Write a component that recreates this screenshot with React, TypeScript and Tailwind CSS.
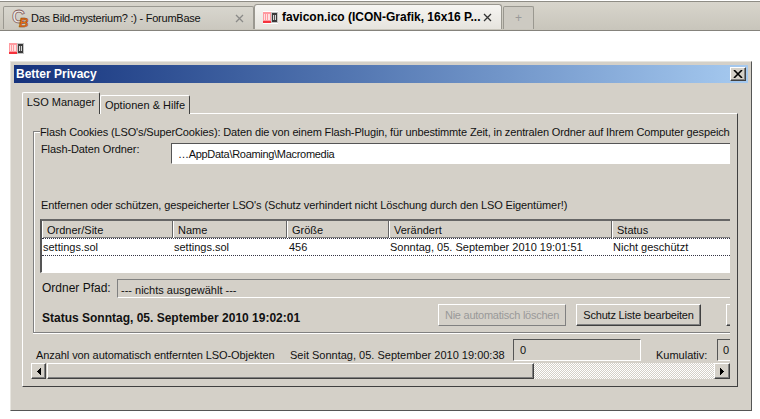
import React from 'react';

const raised = 'border border-t-white border-l-white border-r-[#404040] border-b-[#404040] shadow-[inset_-1px_-1px_0_#808080]';
const sunken = 'border border-t-[#555] border-l-[#555] border-r-white border-b-white';

function FaviconIco() {
  return (
    <svg width="15" height="11" viewBox="0 0 15 11" shapeRendering="crispEdges">
      <rect x="0" y="0" width="8" height="11" fill="#ff9aa0" />
      <rect x="1" y="2" width="1" height="6" fill="#ffe0e0" />
      <rect x="3" y="2" width="1" height="6" fill="#ffe0e0" />
      <rect x="5" y="2" width="2" height="6" fill="#ffe0e0" />
      <rect x="0" y="9" width="8" height="2" fill="#f5333c" />
      <rect x="8" y="0" width="7" height="11" fill="#c4c4c4" />
      <rect x="9" y="1" width="5" height="9" fill="#3a3a3a" />
      <rect x="10" y="3" width="3" height="5" fill="#d8d8d8" />
      <rect x="11" y="3" width="1" height="5" fill="#555" />
    </svg>
  );
}

function ForumLogo() {
  return (
    <svg width="17" height="17" viewBox="0 0 17 17" className="overflow-visible">
      <text x="0" y="13" fontFamily="Liberation Sans" fontSize="18" fontWeight="700" fill="#eeeae6" stroke="#86615e" strokeWidth="0.8">C</text>
      <text x="7" y="16.5" fontFamily="Liberation Sans" fontSize="13" fontWeight="700" fontStyle="italic" fill="#ea6f14" stroke="#6f3510" strokeWidth="0.4">B</text>
    </svg>
  );
}

function TabClose({ color }: { color: string }) {
  return (
    <svg width="9" height="9" viewBox="0 0 9 9" fill="none" stroke={color} strokeWidth="1.3">
      <path d="M1 1 L8 8 M8 1 L1 8" />
    </svg>
  );
}

function Arrow({ dir }: { dir: 'left' | 'right' }) {
  return (
    <svg width="4" height="7" viewBox="0 0 4 7" shapeRendering="crispEdges">
      <path d={dir === 'left' ? 'M4 0 V7 H3 V6 H2 V5 H1 V4 H0 V3 H1 V2 H2 V1 H3 V0 Z' : 'M0 0 V7 H1 V6 H2 V5 H3 V4 H4 V3 H3 V2 H2 V1 H1 V0 Z'} fill="#000" />
    </svg>
  );
}

const columns = [
  { label: 'Ordner/Site', width: 'w-[131px]' },
  { label: 'Name', width: 'w-[114px]' },
  { label: 'Größe', width: 'w-[102px]' },
  { label: 'Verändert', width: 'w-[223px]' },
  { label: 'Status', width: 'w-[130px]' },
];

const cells = [
  { text: 'settings.sol', width: 'w-[131px]' },
  { text: 'settings.sol', width: 'w-[115px]' },
  { text: '456', width: 'w-[101px]' },
  { text: 'Sonntag, 05. September 2010 19:01:51', width: 'w-[223px]' },
  { text: 'Nicht geschützt', width: 'w-[130px]' },
];

export default function App() {
  return (
    <div className="w-[760px] h-[419px] bg-white overflow-hidden text-[11px] leading-[14px] text-[#111] font-['Liberation_Sans',sans-serif]">
      {/* browser tab strip */}
      <div className="h-[30px] mt-px border-t border-t-[#8e8c85] border-b border-b-[#85837c] bg-gradient-to-b from-[#d8d5cc] to-[#c8c5bb] flex items-end pl-[3px] pb-px">
        <div className="w-[251px] h-[23px] flex items-center border border-b-0 border-[#9a9890] rounded-t-[2px] bg-gradient-to-b from-[#d8d6ce] to-[#cbc8bf] pl-[8px] pr-[9px]">
          <ForumLogo />
          <span className="ml-[2px] flex-1 text-[11px] tracking-[-0.25px] text-[#111]">Das Bild-mysterium? :) - ForumBase</span>
          <TabClose color="#8a8a88" />
        </div>
        <div className="w-[248px] h-[25px] flex items-center border border-b-0 border-[#9a9890] rounded-t-[3px] bg-gradient-to-b from-[#f6f5f2] to-[#e6e4de] pl-[8px] pr-[9px]">
          <span className="bg-white py-px flex">
            <FaviconIco />
          </span>
          <span className="ml-[4px] flex-1 whitespace-nowrap text-[12px] font-bold text-black">favicon.ico (ICON-Grafik, 16x16 P...</span>
          <TabClose color="#333" />
        </div>
        <div className="ml-px w-[31px] h-[23px] flex items-center justify-center border border-b-0 border-[#9a9890] rounded-t-[2px] bg-[#cdcac2]">
          <span className="text-[12px] text-[#999]">+</span>
        </div>
      </div>

      {/* page favicon */}
      <div className="h-[30px] pl-[9px] pt-[12px]">
        <FaviconIco />
      </div>

      {/* dialog window */}
      <div className="ml-[10px] w-[742px] h-[350px] bg-[#d4d0c8] border border-t-[#e8e6e0] border-l-[#e8e6e0] border-r-[#555] border-b-[#555] pt-[3px] px-[3px]">
        <div className="h-[18px] flex items-center justify-between bg-gradient-to-r from-[#16327c] to-[#a6caf0] pl-[2px] pr-[2px]">
          <span className="font-bold text-[12px] text-white">Better Privacy</span>
          <button className={`w-[16px] h-[14px] flex items-center justify-center bg-[#d4d0c8] ${raised}`}>
            <svg width="10" height="8" viewBox="0 0 10 8" stroke="#000" strokeWidth="1.6" fill="none">
              <path d="M1 0 L9 8 M9 0 L1 8" />
            </svg>
          </button>
        </div>

        {/* tabs */}
        <div className="mt-[9px] ml-[8px] h-[22px] flex items-end relative z-10 -mb-px">
          <div className="w-[78px] h-[22px] border-t border-l border-r border-t-white border-l-white border-r-[#404040] rounded-t-[2px] bg-[#d4d0c8] flex items-center justify-center pb-[3px]">LSO Manager</div>
          <div className="w-[90px] h-[19px] border-t border-l border-r border-t-white border-l-white border-r-[#404040] rounded-t-[2px] bg-[#d4d0c8] flex items-center justify-center">Optionen &amp; Hilfe</div>
        </div>

        {/* tab panel */}
        <div className="ml-[8px] w-[716px] h-[274px] border border-t-white border-l-white border-r-[#404040] border-b-[#404040] pt-[10px] pl-[8px]">
          <div className="w-[699px] overflow-hidden pt-[7px]">
            <div className="ml-[2px] w-[780px] h-[202px] border border-[#808080] shadow-[inset_1px_1px_0_#fff,0_1px_0_#fff] pl-[6px]">
              <div className="-mt-[7px] w-max whitespace-nowrap bg-[#d4d0c8] pr-[2px] tracking-[-0.13px]">
                Flash Cookies (LSO's/SuperCookies): Daten die von einem Flash-Plugin, für unbestimmte Zeit, in zentralen Ordner auf Ihrem Computer gespeichert werden.
              </div>
              <div className="mt-[4px] flex items-start">
                <div className="w-[131px] shrink-0 pl-px -mt-px tracking-[-0.1px]">Flash-Daten Ordner:</div>
                <div className={`w-[620px] h-[21px] shrink-0 bg-white flex items-center pl-[6px] tracking-[-0.3px] ${sunken}`}>…AppData\Roaming\Macromedia</div>
              </div>
              <div className="mt-[34px] pl-px tracking-[-0.11px]">Entfernen oder schützen, gespeicherter LSO's (Schutz verhindert nicht Löschung durch den LSO Eigentümer!)</div>

              {/* table */}
              <div className="mt-[7px] h-[54px] border-t-2 border-l-2 border-t-[#666] border-l-[#555] border-b border-b-white bg-white">
                <div className="h-[17px] flex bg-[#d4d0c8] shadow-[inset_0_-1px_0_#808080]">
                  {columns.map(col => (
                    <div key={col.label} className={`${col.width} h-[17px] pl-[4px] border-l border-r border-l-white border-r-[#666] flex items-center shrink-0`}>{col.label}</div>
                  ))}
                </div>
                <div className="h-[18px] flex items-center border-t border-b border-dotted border-[#334] bg-white">
                  {cells.map((cell, i) => (
                    <div key={i} className={`${cell.width} pl-px shrink-0 whitespace-nowrap`}>{cell.text}</div>
                  ))}
                </div>
              </div>

              <div className="mt-[6px] flex items-start">
                <div className="w-[77px] shrink-0 pl-[2px] mt-[2px] text-[12px] whitespace-nowrap">Ordner Pfad:</div>
                <div className="w-[640px] h-[19px] shrink-0 border border-t-[#808080] border-l-[#808080] border-r-white border-b-white flex items-center pl-[3px] pt-[2px]">--- nichts ausgewählt ---</div>
              </div>

              <div className="mt-[6px] flex items-start whitespace-nowrap">
                <div className="w-[398px] shrink-0 pl-[2px] mt-[7px] font-bold text-[12px]">Status Sonntag, 05. September 2010 19:02:01</div>
                <button className="w-[128px] h-[22px] shrink-0 flex items-center justify-center border border-t-white border-l-white border-r-[#808080] border-b-[#808080] text-[#999] tracking-[-0.25px]">Nie automatisch löschen</button>
                <button className={`ml-[10px] w-[125px] h-[22px] shrink-0 flex items-center justify-center tracking-[-0.2px] ${raised}`}>Schutz Liste bearbeiten</button>
                <button className={`ml-[25px] w-[100px] h-[22px] shrink-0 ${raised}`} />
              </div>
            </div>

            {/* counters */}
            <div className="mt-[6px] h-[22px] pl-[5px] flex items-start whitespace-nowrap">
              <div className="w-[254px] shrink-0 mt-[9px] tracking-[-0.08px]">Anzahl von automatisch entfernten LSO-Objekten</div>
              <div className="w-[223px] shrink-0 mt-[9px]">Seit Sonntag, 05. September 2010 19:00:38</div>
              <div className={`w-[128px] h-[22px] shrink-0 pl-[6px] pt-[3px] ${sunken}`}>0</div>
              <div className="ml-[15px] w-[61px] shrink-0 mt-[9px]">Kumulativ:</div>
              <div className={`w-[30px] h-[22px] pl-[5px] pt-[3px] shrink-0 ${sunken}`}>0</div>
            </div>

            {/* scrollbar */}
            <div className="mt-[2px] h-[16px] flex">
              <div className={`w-[15px] h-[16px] shrink-0 flex items-center justify-center ${raised}`}><Arrow dir="left" /></div>
              <div className={`ml-px w-[487px] h-[16px] shrink-0 ${raised}`} />
              <div className="w-[180px] h-[16px] shrink-0 bg-[conic-gradient(#fff_25%,#d4d0c8_0_50%,#fff_0_75%,#d4d0c8_0)] bg-[length:2px_2px]" />
              <div className={`w-[16px] h-[16px] shrink-0 flex items-center justify-center ${raised}`}><Arrow dir="right" /></div>
            </div>
          </div>
        </div>
      </div>
    </div>
  );
}
